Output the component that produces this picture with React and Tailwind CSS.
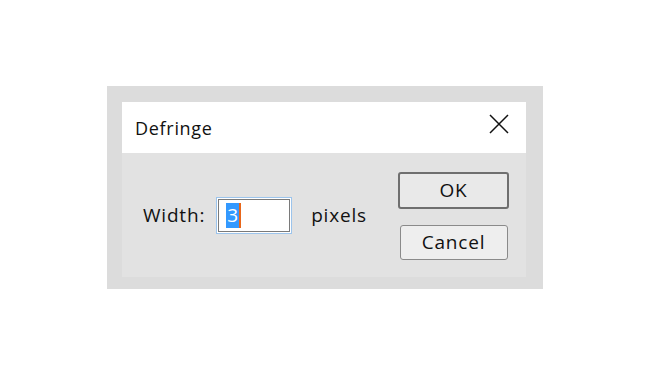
const FONT = "font-['Open_Sans','Noto_Sans',sans-serif]"

function CloseIcon() {
  return (
    <svg width="20" height="20" viewBox="0 0 20 20" className="-mt-[8px]">
      <path d="M1 1 L19 19 M19 1 L1 19" stroke="#111" strokeWidth="1.5" fill="none" />
    </svg>
  )
}

export default function App() {
  return (
    <div className={`h-screen w-full bg-white flex items-center justify-center ${FONT}`}>
      {/* Dialog frame */}
      <div className="w-[436px] h-[203px] bg-[#dcdcdc] pl-[15px] pr-[17px] pt-[16px] pb-[12px] flex flex-col">
        {/* Title bar */}
        <div className="h-[51px] bg-white flex items-center justify-between pl-[13px] pr-[17px]">
          <span className="text-[18px] tracking-[0.7px] text-[#111] leading-none">Defringe</span>
          <CloseIcon />
        </div>

        {/* Body */}
        <div className="flex-1 bg-[#e2e2e2] flex justify-between pl-[21px] pr-[17px]">
          <div className="self-start flex items-center pt-[44px]">
            <span className="text-[19px] tracking-[0.8px] text-[#111] leading-none">Width:</span>
            <div className="ml-[11px] w-[76px] h-[37px] border border-[#9cc4ec] p-px bg-white">
              <div className="h-full border border-[#7a7a7a] flex items-center pl-[7px]">
                <span className="bg-[#3399ff] text-white text-[19px] leading-[25px] px-px">3</span>
                <span className="w-[2px] h-[25px] bg-[#e8661a]" />
              </div>
            </div>
            <span className="ml-[19px] text-[19px] tracking-[0.8px] text-[#111] leading-none">pixels</span>
          </div>

          <div className="flex flex-col items-center pt-[19px] gap-[16px]">
            <button className="w-[111px] h-[37px] bg-[#e9e9e9] border-2 border-[#6f6f6f] rounded-[3px] text-[19px] tracking-[0.8px] text-[#111] flex items-center justify-center">
              OK
            </button>
            <button className="w-[108px] h-[35px] bg-[#eeeeee] border border-[#8a8a8a] rounded-[3px] text-[19px] tracking-[0.8px] text-[#111] flex items-center justify-center">
              Cancel
            </button>
          </div>
        </div>
      </div>
    </div>
  )
}
